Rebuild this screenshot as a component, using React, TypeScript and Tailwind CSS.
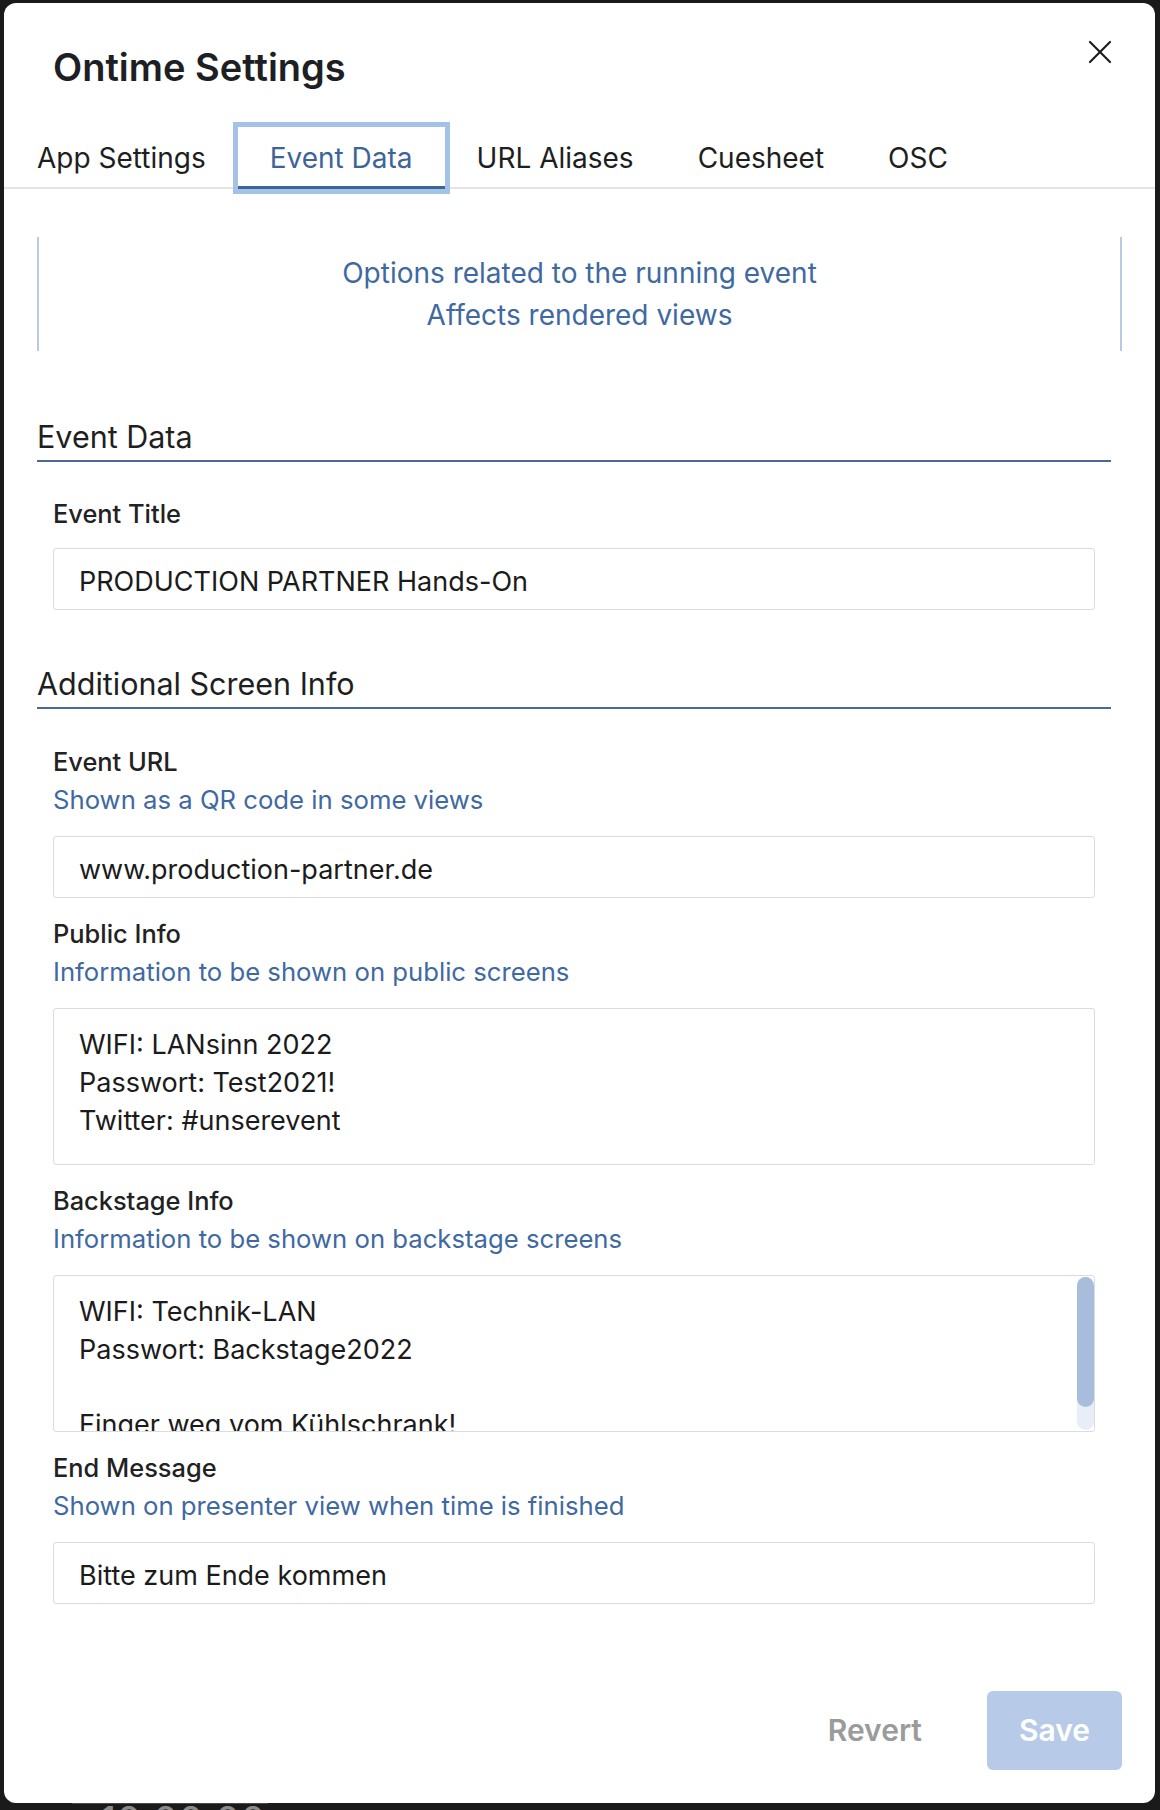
const tabs = ["App Settings", "Event Data", "URL Aliases", "Cuesheet", "OSC"];

function CloseIcon() {
  return (
    <svg width="24" height="24" viewBox="0 0 24 24" fill="none" stroke="#1c1c1c" strokeWidth="2.2" strokeLinecap="round">
      <path d="M2 2 L22 22" />
      <path d="M22 2 L2 22" />
    </svg>
  );
}

function SectionTitle({ children, className = "" }: { children: string; className?: string }) {
  return (
    <div className={`mr-[11px] border-b-2 border-[#4a6996] pb-[3px] text-[30.5px] leading-[40px] text-[#1f1f1f] ${className}`}>
      {children}
    </div>
  );
}

function Label({ title, hint, className = "" }: { title: string; hint?: string; className?: string }) {
  return (
    <div className={className}>
      <div className="text-[25.4px] font-medium leading-[38px] text-[#222222]">{title}</div>
      {hint && <div className="text-[25.7px] leading-[38px] text-[#4069a2]">{hint}</div>}
    </div>
  );
}

function TextInput({ value, className = "" }: { value: string; className?: string }) {
  return (
    <div className={`flex h-[62px] items-center rounded-[3px] border border-[#dcdcdc] pl-[25px] pt-[6px] text-[27px] text-[#1b1b1b] ${className}`}>
      {value}
    </div>
  );
}

function TextArea({ lines, scroll = false, className = "" }: { lines: string[]; scroll?: boolean; className?: string }) {
  return (
    <div className={`flex h-[157px] overflow-hidden rounded-[3px] border border-[#dcdcdc] ${className}`}>
      <div className="flex-1 overflow-hidden pl-[25px] pt-[17px] text-[27px] leading-[37.8px] text-[#1b1b1b]">
        {lines.map((l, i) => (
          <div key={i} className="h-[37.8px] whitespace-pre">
            {l}
          </div>
        ))}
      </div>
      {scroll && (
        <div className="my-[1px] w-[17px] rounded-full bg-[#e8eef6]">
          <div className="h-[130px] rounded-full bg-[#a8bddb]" />
        </div>
      )}
    </div>
  );
}

export default function App() {
  return (
    <div className="h-[1810px] w-[1160px] overflow-hidden bg-[#1a1a1a] pl-[4px] pt-[3px] font-['Inter',sans-serif]">
      <div className="flex h-[1800px] w-[1151px] flex-col overflow-hidden rounded-[12px] bg-white">
        {/* header */}
        <div className="flex items-start justify-between pl-[49px] pr-[43px] pt-[37px]">
          <div className="mt-[4px] text-[38px] font-semibold leading-[46px] text-[#1d1f24]">Ontime Settings</div>
          <CloseIcon />
        </div>

        {/* tabs */}
        <div className="mt-[37px] flex border-b-2 border-[#e4e4e4] pl-[1px]">
          {tabs.map((t) => {
            const active = t === "Event Data";
            return (
              <div
                key={t}
                className={
                  active
                    ? "-mb-[2px] flex h-[62px] items-center border-b-[3px] border-[#3e6497] px-[32px] pt-[3px] text-[28px] text-[#3d6498] ring-[5px] ring-[#a4c2e8]"
                    : "-mb-[2px] flex h-[62px] items-center border-b-[3px] border-transparent px-[32px] pt-[3px] text-[28px] text-[#1e1e1e]"
                }
              >
                {t}
              </div>
            );
          })}
        </div>

        <div className="px-[33px]">
          {/* info box */}
          <div className="mt-[48px] border-x-2 border-[#b9cbe3] pb-[15px] pt-[15px] text-center text-[28px] leading-[42px] text-[#4069a2]">
            <div>Options related to the running event</div>
            <div>Affects rendered views</div>
          </div>

          <SectionTitle className="mt-[66px]">Event Data</SectionTitle>
          <div className="pl-[16px] pr-[27px]">
            <Label className="mt-[33px]" title="Event Title" />
            <TextInput className="mt-[15px]" value="PRODUCTION PARTNER Hands-On" />
          </div>

          <SectionTitle className="mt-[54px]">Additional Screen Info</SectionTitle>
          <div className="pl-[16px] pr-[27px]">
            <Label className="mt-[34px]" title="Event URL" hint="Shown as a QR code in some views" />
            <TextInput className="mt-[17px]" value="www.production-partner.de" />

            <Label className="mt-[17px]" title="Public Info" hint="Information to be shown on public screens" />
            <TextArea className="mt-[17px]" lines={["WIFI: LANsinn 2022", "Passwort: Test2021!", "Twitter: #unserevent"]} />

            <Label className="mt-[17px]" title="Backstage Info" hint="Information to be shown on backstage screens" />
            <TextArea
              className="mt-[17px]"
              scroll
              lines={["WIFI: Technik-LAN", "Passwort: Backstage2022", " ", "Finger weg vom Kühlschrank!"]}
            />

            <Label className="mt-[17px]" title="End Message" hint="Shown on presenter view when time is finished" />
            <TextInput className="mt-[17px]" value="Bitte zum Ende kommen" />
          </div>

          {/* footer */}
          <div className="mt-[87px] flex items-center justify-end gap-[33px]">
            <button className="flex h-[79px] items-center px-[32px] text-[30px] font-semibold text-[#9b9b9b]">Revert</button>
            <button className="flex h-[79px] items-center rounded-[6px] bg-[#b7cbe8] px-[32px] text-[30px] font-semibold text-white">
              Save
            </button>
          </div>
        </div>
      </div>

      {/* clock peeking out below the modal */}
      <div className="ml-[68px] h-[7px] w-[196px] overflow-hidden border-t border-[#4a4a4a]">
        <div className="-mt-[3px] pl-[28px] text-[40px] leading-[40px] text-[#8a8a8a]">10:00:00</div>
      </div>
    </div>
  );
}
